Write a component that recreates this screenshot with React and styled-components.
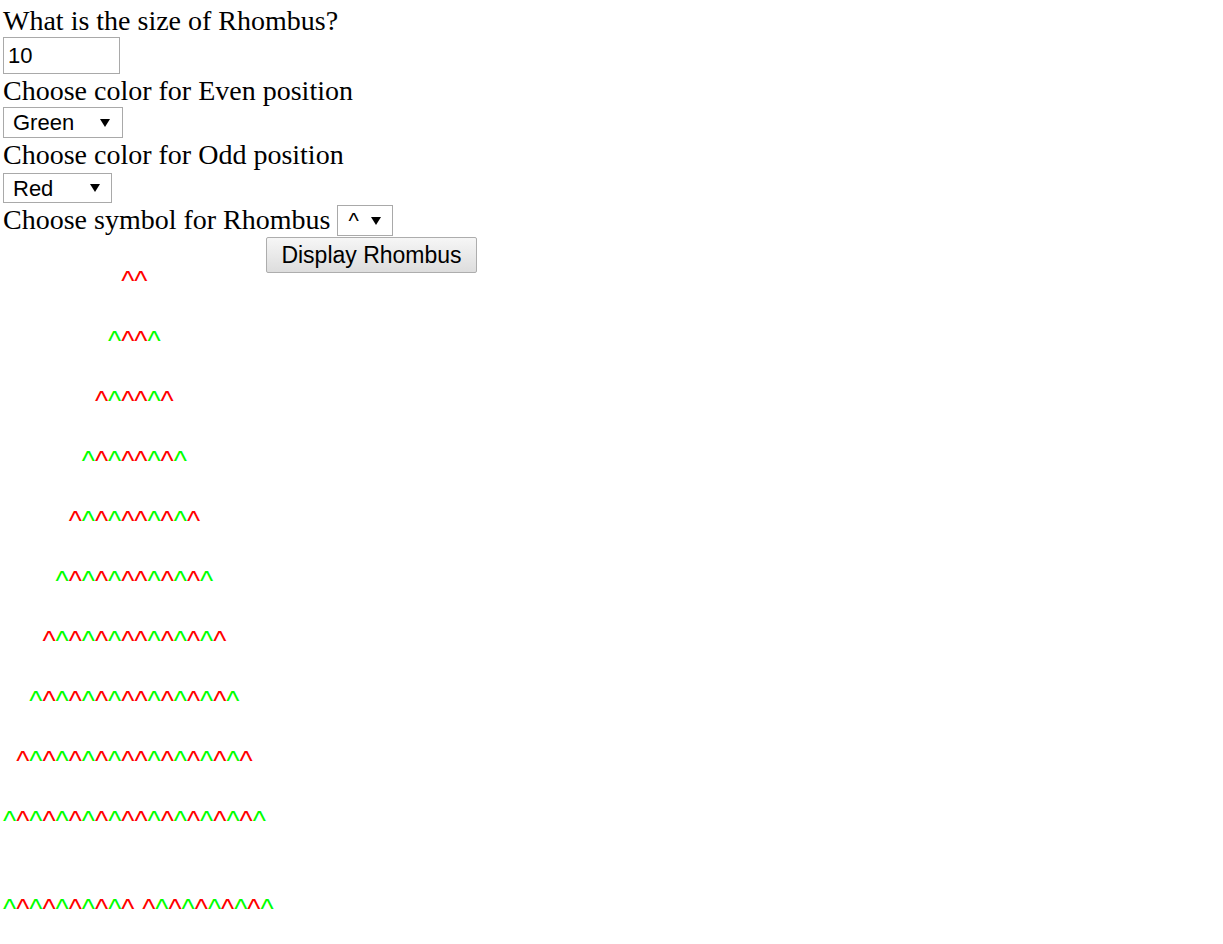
import React from "react";
import styled, { createGlobalStyle } from "styled-components";

const GlobalStyle = createGlobalStyle`
  html, body { margin: 0; padding: 0; background: #ffffff; }
`;

const Page = styled.div`
  padding: 4px 0 0 3px;
  display: flex;
  flex-direction: column;
  align-items: flex-start;
  font-family: "Liberation Serif", "Times New Roman", serif;
  font-size: 28px;
  color: #000000;
`;

const Label = styled.div`
  height: 33px;
  line-height: 33px;
  white-space: nowrap;
`;

const SizeInput = styled.input`
  box-sizing: border-box;
  width: 117px;
  height: 37px;
  margin: 0;
  padding: 0 0 0 4px;
  border: 1px solid #a9a9a9;
  border-radius: 0;
  outline: none;
  font-family: "Liberation Sans", Arial, sans-serif;
  font-size: 22px;
  color: #000000;
  background: #ffffff;
`;

const SelectWrap = styled.span`
  position: relative;
  display: inline-flex;
  margin-top: ${(p) => p.$mt || 0}px;
  &::after {
    content: "";
    position: absolute;
    right: ${(p) => p.$arrowRight}px;
    top: 50%;
    margin-top: -4px;
    border-left: 5px solid transparent;
    border-right: 5px solid transparent;
    border-top: 8px solid #000000;
    pointer-events: none;
  }
`;

const Select = styled.select`
  appearance: none;
  -webkit-appearance: none;
  box-sizing: border-box;
  width: ${(p) => p.$w}px;
  height: ${(p) => p.$h}px;
  margin: 0;
  padding: 0 0 0 ${(p) => p.$pl || 9}px;
  border: 1px solid #a9a9a9;
  border-radius: 0;
  outline: none;
  background: #ffffff;
  font-family: "Liberation Sans", Arial, sans-serif;
  font-size: 22px;
  color: #000000;
`;

const SymbolRow = styled.div`
  display: flex;
  align-items: flex-end;
  gap: 7px;
  height: 33px;
`;

const DisplayButton = styled.button`
  box-sizing: border-box;
  width: 211px;
  height: 36px;
  margin: 1px 0 0 263px;
  padding: 0 13px;
  border: 1px solid #adadad;
  border-radius: 2px;
  background: linear-gradient(#f6f6f6, #dddddd);
  font-family: "Liberation Sans", Arial, sans-serif;
  font-size: 23px;
  color: #000000;
  white-space: nowrap;
`;

const Rhombus = styled.div`
  display: flex;
  flex-direction: column;
  gap: 44px;
  font-family: "Liberation Sans", Arial, sans-serif;
  font-size: 28px;
`;

const RhombusRow = styled.div`
  height: 16px;
  line-height: 16px;
  white-space: pre;
  padding-left: ${(p) => p.$indent * 0.46875}em;
  margin-top: ${(p) => (p.$spaced ? 28 : 0)}px;
`;

const Glyph = styled.span`
  color: ${(p) => p.$color};
`;

const EVEN = "#00ff00";
const ODD = "#ff0000";
const SIZE = 10;
const SYMBOL = "^";

function halfColors(i) {
  const left = [];
  for (let j = 0; j < i; j++) left.push((i - 1 - j) % 2 === 0 ? ODD : EVEN);
  return left;
}

function Row({ i, split, spaced }) {
  const left = halfColors(i);
  const right = [...left].reverse();
  return (
    <RhombusRow $indent={SIZE - i} $spaced={spaced}>
      {left.map((c, k) => (
        <Glyph key={"l" + k} $color={c}>{SYMBOL}</Glyph>
      ))}
      {split ? " " : null}
      {right.map((c, k) => (
        <Glyph key={"r" + k} $color={c}>{SYMBOL}</Glyph>
      ))}
    </RhombusRow>
  );
}

export default function App() {
  const rows = [];
  for (let i = 1; i <= SIZE; i++) rows.push(i);
  return (
    <>
      <GlobalStyle />
      <Page>
        <Label>What is the size of Rhombus?</Label>
        <SizeInput type="text" defaultValue="10" />
        <Label>Choose color for Even position</Label>
        <SelectWrap $arrowRight={13}>
          <Select $w={120} $h={31} defaultValue="Green">
            <option>Green</option>
            <option>Red</option>
            <option>Blue</option>
          </Select>
        </SelectWrap>
        <Label>Choose color for Odd position</Label>
        <SelectWrap $mt={2} $arrowRight={12}>
          <Select $w={109} $h={30} defaultValue="Red">
            <option>Red</option>
            <option>Green</option>
            <option>Blue</option>
          </Select>
        </SelectWrap>
        <SymbolRow>
          <Label>Choose symbol for Rhombus</Label>
          <SelectWrap $arrowRight={12}>
            <Select $w={56} $h={31} $pl={10} defaultValue="^">
              <option>^</option>
              <option>*</option>
              <option>#</option>
            </Select>
          </SelectWrap>
        </SymbolRow>
        <DisplayButton type="button">Display Rhombus</DisplayButton>
        <Rhombus>
          {rows.map((i) => (
            <Row key={i} i={i} />
          ))}
          <Row i={SIZE} split spaced />
        </Rhombus>
      </Page>
    </>
  );
}
